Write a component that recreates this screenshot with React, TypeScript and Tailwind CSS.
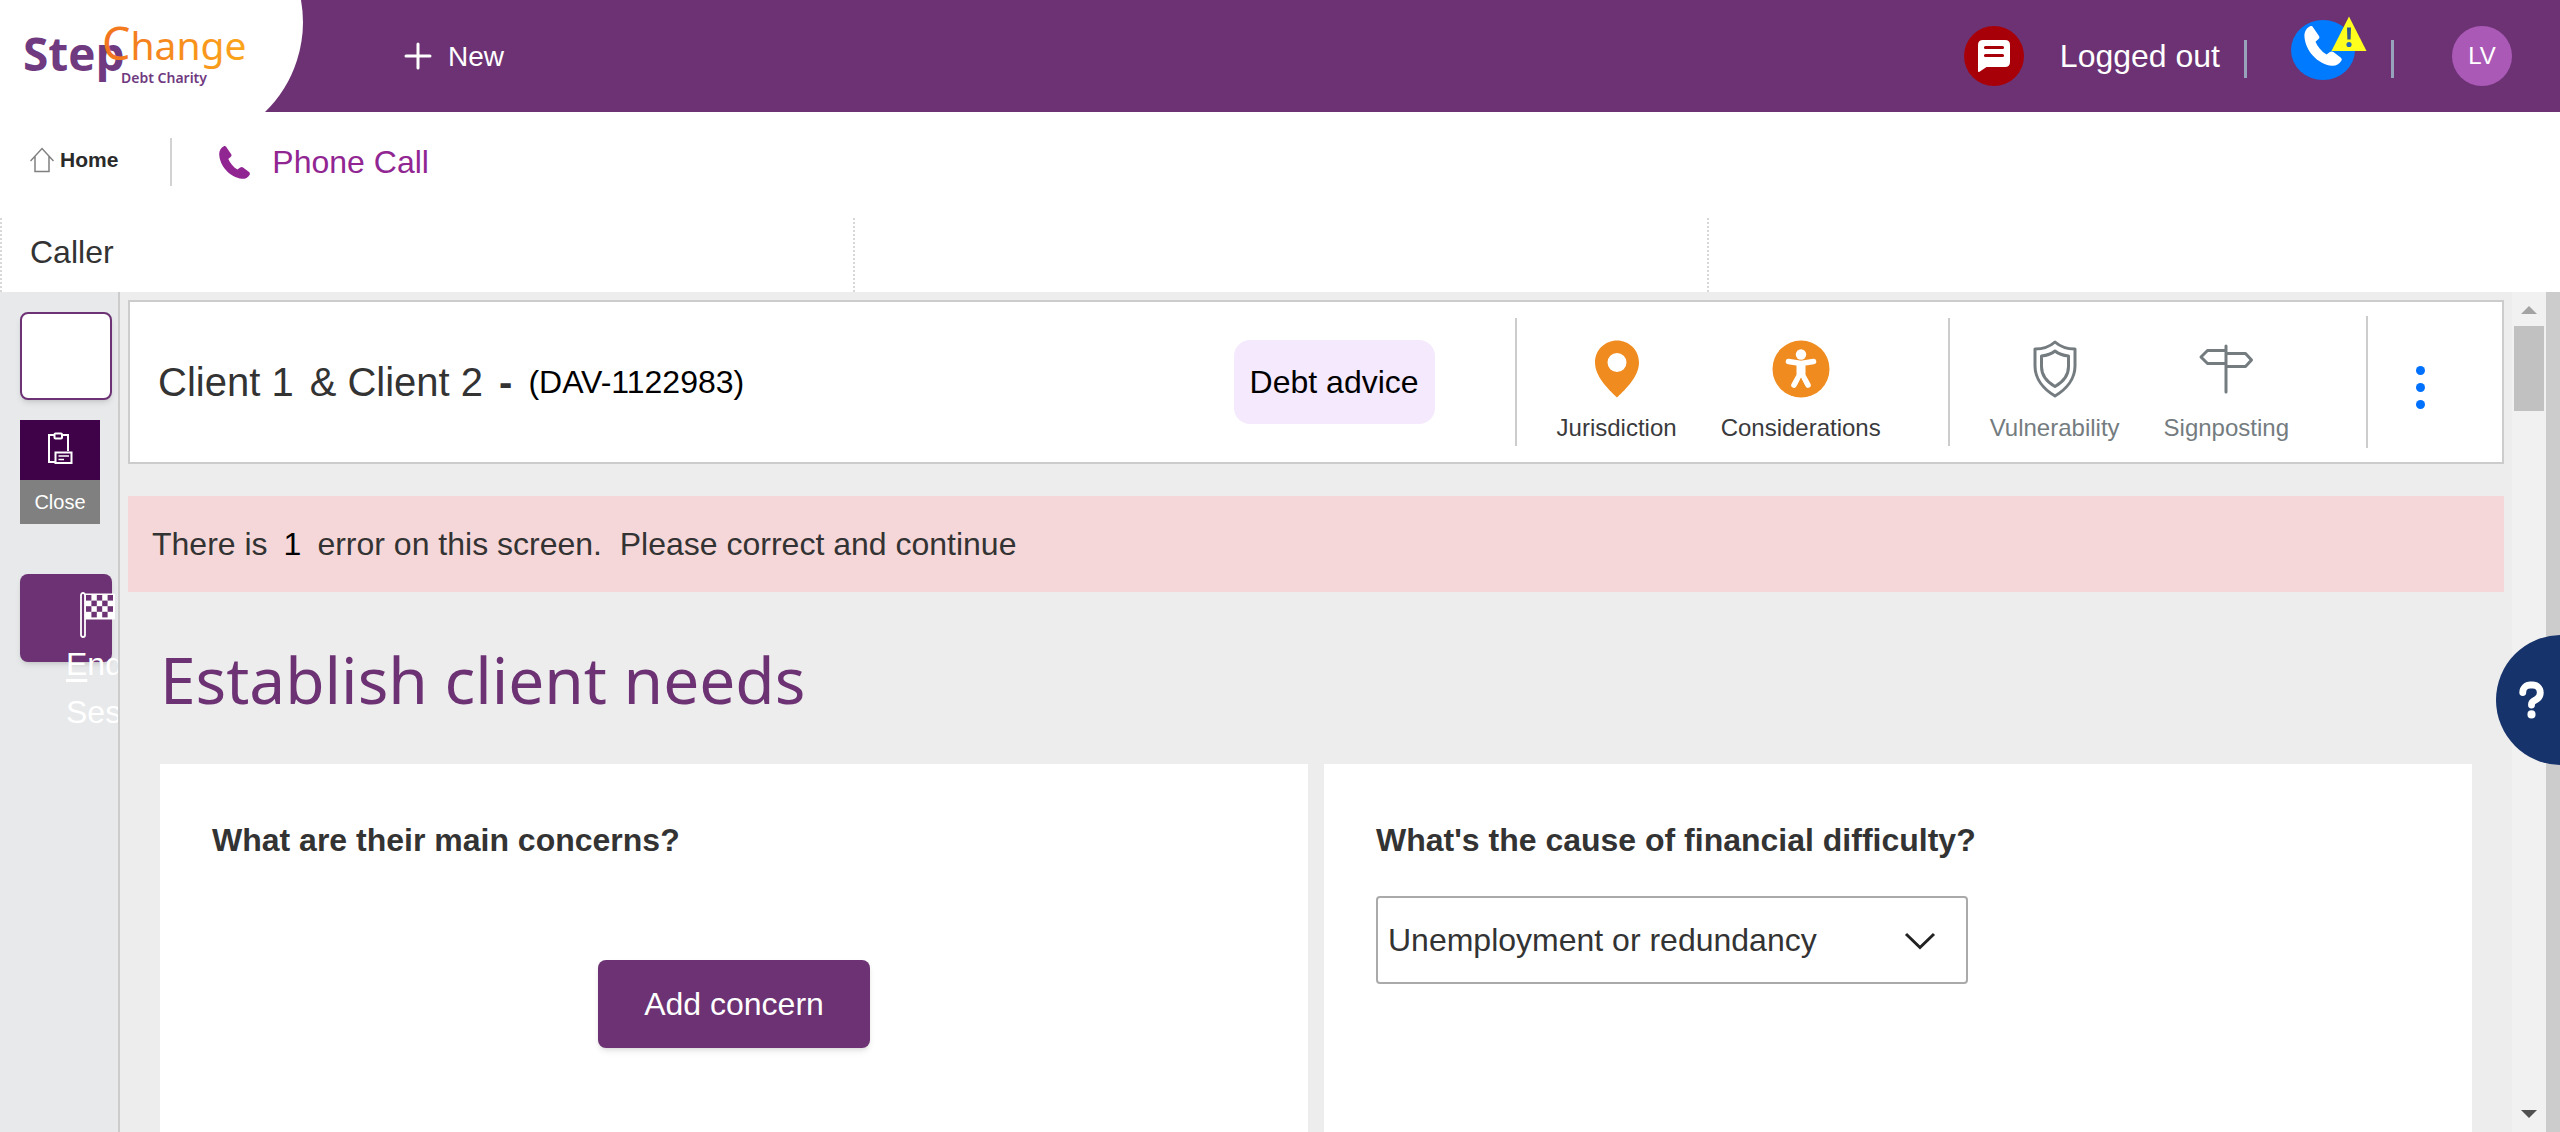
import React from "react";
import { FaQuestion } from "react-icons/fa6";

function Logo() {
  return (
    <svg width="304" height="112" viewBox="0 0 304 112" role="img" aria-label="StepChange Debt Charity" className="shrink-0">
      <defs>
        <linearGradient id="orange" x1="0" x2="1">
          <stop offset="0" stopColor="#f2731f" />
          <stop offset="1" stopColor="#fba61b" />
        </linearGradient>
      </defs>
      <path d="M0 0H301A125.6 125.6 0 0 1 265 112H0Z" fill="#fff" />
      <text x="23" y="71" fontFamily="'Open Sans', sans-serif" fontWeight="700" fontSize="46" fill="#6f3a80">Step</text>
      <text x="102" y="60" fontFamily="'Noto Sans', sans-serif" fontSize="39" fill="url(#orange)">
        <tspan fontSize="45">C</tspan>
        hange
      </text>
      <text x="121" y="83" fontFamily="'Noto Sans', sans-serif" fontWeight="600" fontSize="14" fill="#6f3a80">Debt Charity</text>
    </svg>
  );
}

const handset =
  "M7.2 0.6 12.6 8.4C13.2 9.4 13 10.4 12.2 11.1L9.6 13.3C11.5 17.6 14.6 21.4 19 24.3L21.9 22.2C22.8 21.5 23.9 21.5 24.8 22.2L31 26.8C32 27.6 32.2 28.8 31.5 29.8 29.6 32.6 27 34 23.8 33.8 11 32.4 0.6 20.4 0.2 8.2 0.2 4.6 2.2 1.6 5 0.2 5.8-0.2 6.7-0.1 7.2 0.6Z";

function TopBar() {
  return (
    <header className="flex h-28 items-center bg-[#6c3273] text-white">
      <Logo />
      <button type="button" className="ml-[100px] flex items-center gap-4 text-[28px]">
        <svg width="28" height="28" viewBox="0 0 28 28" stroke="#fff" strokeWidth="3" strokeLinecap="round">
          <path d="M14 2V26M2 14H26" />
        </svg>
        <span className="pt-0.5">New</span>
      </button>
      <button type="button" aria-label="Messages" className="ml-auto flex size-[60px] items-center justify-center rounded-full bg-[#a80008]">
        <svg width="32" height="34" viewBox="0 0 32 34">
          <path d="M5 1H27Q32 1 32 6V23Q32 28 27 28H8.5L1.5 32.8Q0 33.6 0 32V6Q0 1 5 1Z" fill="#fff" />
          <path d="M7.500 8.500H24.500M7.500 16.500H24.500" stroke="#a80008" strokeWidth="3.200" strokeLinecap="round" />
        </svg>
      </button>
      <span className="ml-9 text-[32px]">Logged out</span>
      <span className="ml-6 mt-1.5 h-[38px] w-[3px] bg-[#97a3bb]" />
      <button type="button" aria-label="Phone status" className="relative mb-3 ml-11 flex h-[60px] w-16 items-center justify-center rounded-[50%] bg-[#007bff]">
        <svg width="38" height="40" viewBox="0 0 32 34" className="mb-2">
          <path d={handset} fill="#fff" />
        </svg>
        <svg width="36" height="36" viewBox="0 0 36 36" className="absolute -top-1 left-10">
          <path d="M18 0.500 35.500 35H0.500Z" fill="#ffff1e" />
          <path d="M16 11.500H20L19.600 23.500H16.400Z" fill="#33578f" />
          <circle cx="18" cy="28.500" r="2.600" fill="#2467b8" />
        </svg>
      </button>
      <span className="ml-9 mt-1.5 h-[38px] w-[3px] bg-[#97a3bb]" />
      <button type="button" className="ml-[58px] mr-12 size-[60px] rounded-full bg-[#ab59b7] text-2xl">LV</button>
    </header>
  );
}

function Tabs() {
  return (
    <nav className="flex h-[100px] items-center pl-[30px]">
      <a href="#home" className="mb-1 flex items-center gap-1.5 text-[21px] font-bold text-[#2a2a2a]">
        <svg width="24" height="26" viewBox="0 0 24 26" fill="none" stroke="#808080" strokeWidth="1.500">
          <path d="M0.500 14 12 1.500 23.500 14M5 9.500V24.500H19V9.500" />
        </svg>
        Home
      </a>
      <span className="ml-[52px] h-12 w-0.5 bg-[#d2d2d2]" />
      <a href="#call" className="ml-[47px] flex items-center gap-[22px] text-[32px] text-[#912693]">
        <svg width="31" height="33" viewBox="0 0 32 34">
          <path d={handset} fill="#912693" />
        </svg>
        Phone Call
      </a>
    </nav>
  );
}

function CallerRow() {
  return (
    <div className="mt-1.5 grid h-[74px] grid-cols-3 text-[32px]">
      <div className="flex items-center border-l-2 border-dotted border-[#d8d8d8] pb-1.5 pl-7">Caller</div>
      <div className="border-l-2 border-dotted border-[#d8d8d8]" />
      <div className="border-l-2 border-dotted border-[#d8d8d8]" />
    </div>
  );
}

function Flag() {
  const cells = [];
  for (let r = 0; r < 4; r++) {
    for (let c = 0; c < 5; c++) {
      if ((r + c) % 2 === 0) cells.push(<rect key={`${r}${c}`} x={6 + c * 5.4} y={3 + r * 5.6} width="5.400" height="5.600" fill="#6c3273" />);
    }
  }
  return (
    <svg width="35" height="46" viewBox="0 0 35 46" className="ml-3.5 shrink-0">
      <rect x="4" y="1.500" width="31" height="26" rx="1.500" fill="#fff" />
      {cells}
      <rect x="1" y="1" width="4" height="44" rx="2" fill="#6c3273" stroke="#fff" strokeWidth="1.800" />
    </svg>
  );
}

function Sidebar() {
  return (
    <aside className="flex w-[120px] shrink-0 flex-col items-start overflow-hidden border-r-2 border-[#ccc] bg-[#e7e9eb] pl-5 pt-5">
      <button type="button" aria-label="Blank action" className="h-[88px] w-[92px] rounded-lg border-2 border-[#6c3273] bg-white shadow-md" />
      <button type="button" className="mt-5 w-20 text-xl text-white">
        <span className="flex h-[60px] items-center justify-center bg-[#3f0248]">
          <svg width="26" height="32" viewBox="0 0 26 32" fill="none" stroke="#fff" strokeWidth="2" className="mb-1">
            <path d="M7 3H2V30H8M15 3H21V19" />
            <rect x="7.500" y="1.500" width="7.500" height="5" rx="1" />
            <rect x="8.500" y="20.500" width="16" height="10.500" />
            <path d="M11.500 24H22M11.500 27.500H17" strokeWidth="1.700" />
          </svg>
        </span>
        <span className="flex h-11 items-center justify-center bg-[#808080]">Close</span>
      </button>
      <button type="button" className="mt-[50px] flex h-[88px] w-[92px] flex-col items-start rounded-lg bg-[#6c3273] pl-[46px] pt-[18px] text-left text-[32px] leading-[48px] text-white shadow-md">
        <Flag />
        <span className="mt-0.5">
          <u className="underline-offset-4">E</u>nd
        </span>
        <span>Session</span>
      </button>
    </aside>
  );
}

function Status({ label, tone, children }: { label: string; tone: "dark" | "grey"; children: React.ReactNode }) {
  return (
    <button type="button" className={`flex flex-col items-center gap-3.5 text-2xl leading-8 ${tone === "dark" ? "text-[#3a3a3c]" : "text-[#747c80]"}`}>
      <svg width="58" height="58" viewBox="0 0 58 58" fill="none">
        {children}
      </svg>
      {label}
    </button>
  );
}

function ClientCard() {
  return (
    <section className="flex h-[164px] items-center border-2 border-[#ccc] bg-white pl-7">
      <h2 className="flex items-center text-[40px] text-[#333]">
        <span>Client 1</span>
        <span className="ml-4">&amp; Client 2</span>
        <span className="ml-4 font-bold">-</span>
        <span className="ml-4 text-[32px] text-black">(DAV-1122983)</span>
      </h2>
      <span className="ml-auto flex h-[84px] items-center rounded-2xl bg-[#f4e9fd] px-4 text-[32px] text-black">Debt advice</span>
      <span className="ml-20 h-32 w-0.5 bg-[#ccc]" />
      <div className="ml-10 mt-5 flex gap-11">
        <Status label="Jurisdiction" tone="dark">
          <path fillRule="evenodd" fill="#f08c1f" d="M29 0.500C41 0.500 51 10 51 22.500 51 36 38.500 48.500 29 57.500 19.500 48.500 7 36 7 22.500 7 10 17 0.500 29 0.500ZM29 13A9.500 9.500 0 1 0 29 32 9.500 9.500 0 1 0 29 13Z" />
        </Status>
        <Status label="Considerations" tone="dark">
          <circle cx="29" cy="29" r="28.500" fill="#f08c1f" />
          <circle cx="29" cy="14.500" r="5.200" fill="#fff" />
          <path d="M16.500 21.500 29 23.500 41.500 21.500M27.500 35 22 45M30.500 35 36 45" stroke="#fff" strokeWidth="5.600" strokeLinecap="round" />
          <path d="M24.500 22H33.500V33L33 38 29 38 25 38 24.500 33Z" fill="#fff" />
          <path d="M29 37.500 32 44.500H26Z" fill="#f08c1f" />
        </Status>
      </div>
      <span className="ml-[67px] h-32 w-0.5 bg-[#ccc]" />
      <div className="ml-10 mt-5 flex gap-11">
        <Status label="Vulnerability" tone="grey">
          <g stroke="#747c80" strokeWidth="3" strokeLinejoin="round">
            <path d="M29 2C34 6.500 41 9 49 9V26C49 39 40 49.500 29 56 18 49.500 9 39 9 26V9C17 9 24 6.500 29 2Z" />
            <path d="M29 11C32.500 14 37 15.500 42.500 16V26.500C42.500 35 37 42 29 46.500 21 42 15.500 35 15.500 26.500V16C21 15.500 25.500 14 29 11Z" />
          </g>
        </Status>
        <Status label="Signposting" tone="grey">
          <g stroke="#747c80" strokeWidth="3" strokeLinecap="round" strokeLinejoin="round">
            <path d="M29 6V52M29 10.500H10.500L4 17 10.500 23.500H29M29 13.500H48.500L54.500 20 48.500 26.500H29" />
          </g>
        </Status>
      </div>
      <span className="ml-[77px] h-[132px] w-0.5 bg-[#ccc]" />
      <button type="button" aria-label="More options" className="ml-12 mr-[77px] mt-2.5 flex flex-col gap-2">
        <span className="size-[9px] rounded-full bg-[#0070ff]" />
        <span className="size-[9px] rounded-full bg-[#0070ff]" />
        <span className="size-[9px] rounded-full bg-[#0070ff]" />
      </button>
    </section>
  );
}

function Main() {
  return (
    <main className="flex min-w-0 flex-1 flex-col bg-[#ededed] px-2 pt-2">
      <ClientCard />
      <p role="alert" className="mt-8 flex h-24 items-center gap-4 bg-[#f5d7d9] pl-6 text-[32px] text-[#333]">
        <span>There is</span>
        <span className="text-black">1</span>
        <span className="whitespace-pre">error on this screen.  Please correct and continue</span>
      </p>
      <h1 className="mt-10 pl-8 font-['Noto_Sans',sans-serif] text-[64px] leading-[96px] text-[#6c3273]">Establish client needs</h1>
      <div className="mx-8 mt-9 grid flex-1 grid-cols-2 gap-4">
        <section className="bg-white px-[52px] pb-20 pt-[52px]">
          <h3 className="text-[32px] font-bold leading-[48px]">What are their main concerns?</h3>
          <div className="mt-24 flex justify-center">
            <button type="button" className="h-[88px] rounded-lg bg-[#6c3273] px-[46px] text-[32px] text-white shadow-md">Add concern</button>
          </div>
        </section>
        <section className="bg-white px-[52px] pt-[52px]">
          <label htmlFor="cause" className="block text-[32px] font-bold leading-[48px]">
            What's the cause of financial difficulty?
          </label>
          <div className="relative mt-8 max-w-[592px]">
            <select id="cause" className="h-[88px] w-full appearance-none rounded border-2 border-[#aaa] bg-white pl-2.5 text-[32px] text-[#333]">
              <option>Unemployment or redundancy</option>
            </select>
            <svg width="32" height="18" viewBox="0 0 32 18" fill="none" stroke="#222" strokeWidth="3" className="pointer-events-none absolute right-8 top-9">
              <path d="M2 2 16 15.500 30 2" />
            </svg>
          </div>
        </section>
      </div>
    </main>
  );
}

function ScrollTrack() {
  return (
    <div aria-hidden="true" className="flex w-12 shrink-0 flex-col items-center border-r-[14px] border-[#ccc] bg-[#f1f1f1] pb-3.5 pt-3.5">
      <svg width="16" height="8" viewBox="0 0 16 8">
        <path d="M8 0 16 8H0Z" fill="#a3a3a3" />
      </svg>
      <div className="mt-3 h-[85px] w-[30px] bg-[#c1c1c1]" />
      <svg width="16" height="8" viewBox="0 0 16 8" className="mt-auto">
        <path d="M8 8 16 0H0Z" fill="#505050" />
      </svg>
    </div>
  );
}

export default function App() {
  return (
    <div className="relative flex min-h-screen flex-col overflow-hidden bg-white font-['Liberation_Sans',Arial,sans-serif] text-[#333]">
      <TopBar />
      <Tabs />
      <CallerRow />
      <div className="flex flex-1">
        <Sidebar />
        <Main />
        <ScrollTrack />
      </div>
      <button type="button" aria-label="Help" className="absolute -right-[66px] top-[635px] flex size-[130px] items-center rounded-full bg-[#16336b] pl-[22px] text-white">
        <FaQuestion className="h-10 w-[27px] overflow-visible stroke-white stroke-[24px]" />
      </button>
    </div>
  );
}
